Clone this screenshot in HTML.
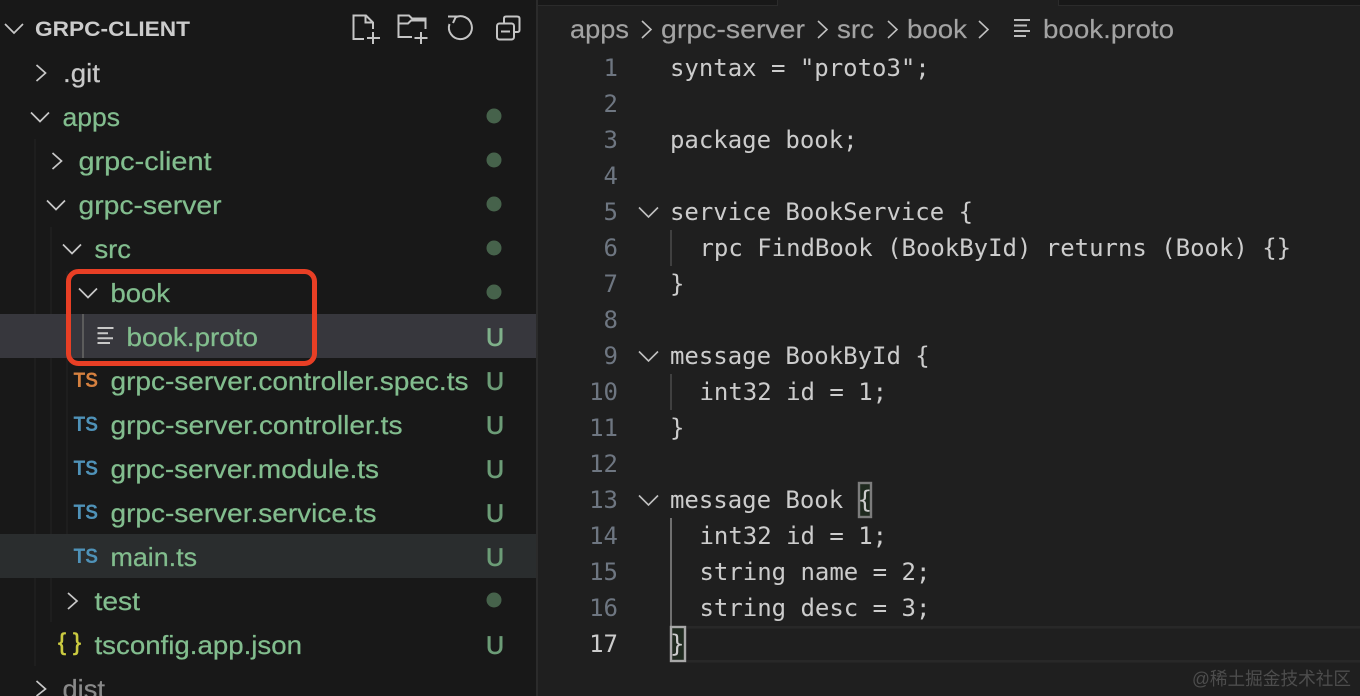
<!DOCTYPE html>
<html><head><meta charset="utf-8"><style>
html,body{margin:0;padding:0;background:#1f1f1f;width:1360px;height:696px;overflow:hidden}
svg{display:block}
text{white-space:pre}
.t{font-family:"Liberation Sans",sans-serif;font-size:26px;fill:#82bd8e;stroke:#82bd8e;stroke-width:.25}
.g{fill:#c8c8c8;stroke:#c8c8c8}
.d{fill:#8a8a8a;stroke:#8a8a8a}
.u{font-family:"Liberation Sans",sans-serif;font-size:25px;fill:#6c9c77;stroke:#6c9c77;stroke-width:.7}
.ts{font-family:"Liberation Sans",sans-serif;font-size:21px;font-weight:700;fill:#4f92b8}
.b{font-family:"Liberation Sans",sans-serif;font-size:26px;fill:#a3a3a3;stroke:#a3a3a3;stroke-width:.15}
.c{font-family:"DejaVu Sans Mono","Liberation Mono",monospace;font-size:24px;letter-spacing:-.02px;fill:#cccccc}
.n{font-family:"DejaVu Sans Mono","Liberation Mono",monospace;font-size:24px;fill:#6e7681;text-anchor:end}
.chev{fill:none;stroke:#c8c8c8;stroke-width:1.7}
.ic{fill:none;stroke:#c5c5c5;stroke-width:2}
.fold{fill:none;stroke:#c0c0c0;stroke-width:1.6}
</style></head><body>
<svg width="1360" height="696" viewBox="0 0 1360 696" xmlns="http://www.w3.org/2000/svg">
<rect width="1360" height="696" fill="#1f1f1f"/>
<rect x="0" y="0" width="536" height="696" fill="#181818"/>
<rect x="536" y="0" width="2" height="696" fill="#2b2b2b"/>
<!-- tab strip -->
<rect x="538" y="0" width="240" height="5" fill="#181818"/>
<rect x="778" y="0" width="280" height="6" fill="#1f1f1f"/>
<rect x="1058" y="0" width="302" height="5" fill="#181818"/>
<rect x="538" y="5" width="240" height="1" fill="#2b2b2b"/>
<rect x="1058" y="5" width="302" height="1" fill="#2b2b2b"/>
<rect x="777" y="0" width="1" height="6" fill="#2b2b2b"/>
<rect x="1058" y="0" width="1" height="6" fill="#2b2b2b"/>

<!-- indent guides -->
<rect x="34" y="139" width="2" height="527" fill="#1e1e1e"/>
<rect x="50" y="227" width="2" height="395" fill="#1e1e1e"/>
<rect x="66" y="271" width="2" height="307" fill="#1e1e1e"/>

<!-- rows -->
<rect x="0" y="314" width="536" height="44" fill="#37373d"/>
<rect x="0" y="534" width="536" height="44" fill="#2a2d2e"/>
<rect x="82" y="314" width="2" height="44" fill="#5c5c5c"/>

<!-- header -->
<path class="chev" d="M5 24 L14 33 L23 24"/>
<text x="35" y="36" style="font-family:'Liberation Sans',sans-serif;font-size:21px;font-weight:700;fill:#cccccc" textLength="155" lengthAdjust="spacingAndGlyphs">GRPC-CLIENT</text>
<!-- new file -->
<path class="ic" d="M364 39 H353.500 V15.500 H366 L373 22.500 V29 M365.500 15.500 V22.500 H373"/>
<path class="ic" d="M373 32 V44 M367 38 H380"/>
<!-- new folder -->
<path class="ic" d="M412 37 H398.500 V15.500 H409 L412 18.500 H425.500 V29 M398.500 23.500 H408 L411 20.500 H425.500"/>
<path class="ic" d="M421 32 V44 M414.500 38 H427.500"/>
<!-- refresh -->
<path class="ic" d="M455 17.500 A11.500 11.500 0 1 1 449.500 24"/>
<path class="ic" d="M448 16.500 H456 L453 23"/>
<!-- collapse -->
<path class="ic" d="M504 23 V18.500 Q504 16.500 506 16.500 H517 Q519.500 16.500 519.500 18.500 V30 Q519.500 32 517 32 H514"/>
<rect class="ic" x="497" y="23.500" width="17" height="16" rx="2.500"/>
<path class="ic" d="M501 31.500 H510"/>

<!-- chevrons -->
<path class="chev" d="M36.500 65 L45.500 73 L36.500 81"/>
<path class="chev" d="M31 112.500 L40 121.500 L49 112.500"/>
<path class="chev" d="M52.500 153 L61.500 161 L52.500 169"/>
<path class="chev" d="M47 200.500 L56 209.500 L65 200.500"/>
<path class="chev" d="M63 244.500 L72 253.500 L81 244.500"/>
<path class="chev" d="M79 288.500 L88 297.500 L97 288.500"/>
<path class="chev" d="M68 593 L77 601 L68 609"/>
<path class="chev" d="M36.500 681 L45.500 689 L36.500 696"/>

<!-- tree text -->
<text class="t g" x="63" y="82" textLength="37" lengthAdjust="spacingAndGlyphs">.git</text>
<text class="t" x="62.500" y="126" textLength="57.500" lengthAdjust="spacingAndGlyphs">apps</text>
<text class="t" x="78.500" y="170" textLength="133" lengthAdjust="spacingAndGlyphs">grpc-client</text>
<text class="t" x="78.500" y="214" textLength="143" lengthAdjust="spacingAndGlyphs">grpc-server</text>
<text class="t" x="94.500" y="258" textLength="36.500" lengthAdjust="spacingAndGlyphs">src</text>
<text class="t" x="110.500" y="302" textLength="59.500" lengthAdjust="spacingAndGlyphs">book</text>
<text class="t" x="126.500" y="346" textLength="131.500" lengthAdjust="spacingAndGlyphs">book.proto</text>
<text class="t" x="110.500" y="390" textLength="358" lengthAdjust="spacingAndGlyphs">grpc-server.controller.spec.ts</text>
<text class="t" x="110.500" y="434" textLength="292" lengthAdjust="spacingAndGlyphs">grpc-server.controller.ts</text>
<text class="t" x="110.500" y="478" textLength="268.500" lengthAdjust="spacingAndGlyphs">grpc-server.module.ts</text>
<text class="t" x="110.500" y="522" textLength="266" lengthAdjust="spacingAndGlyphs">grpc-server.service.ts</text>
<text class="t" x="110.500" y="566" textLength="86.500" lengthAdjust="spacingAndGlyphs">main.ts</text>
<text class="t" x="94.500" y="610" textLength="45.500" lengthAdjust="spacingAndGlyphs">test</text>
<text class="t" x="94.500" y="654" textLength="207.500" lengthAdjust="spacingAndGlyphs">tsconfig.app.json</text>
<text class="t d" x="62.500" y="698" textLength="42.500" lengthAdjust="spacingAndGlyphs">dist</text>

<!-- file icons -->
<path d="M97.500 328 H113.500 M97.500 333.300 H108 M97.500 338.300 H113 M97.500 343 H110" stroke="#c8c8c8" stroke-width="2" fill="none"/>
<text class="ts" x="73.500" y="387" style="fill:#d5803f" textLength="24.500" lengthAdjust="spacingAndGlyphs">TS</text>
<text class="ts" x="73.500" y="431" textLength="24.500" lengthAdjust="spacingAndGlyphs">TS</text>
<text class="ts" x="73.500" y="475" textLength="24.500" lengthAdjust="spacingAndGlyphs">TS</text>
<text class="ts" x="73.500" y="519" textLength="24.500" lengthAdjust="spacingAndGlyphs">TS</text>
<text class="ts" x="73.500" y="563" textLength="24.500" lengthAdjust="spacingAndGlyphs">TS</text>
<text x="58" y="650" style="font-family:'Liberation Sans',sans-serif;font-size:24px;fill:#cbcb41;stroke:#cbcb41;stroke-width:.6">{</text>
<text x="73" y="650" style="font-family:'Liberation Sans',sans-serif;font-size:24px;fill:#cbcb41;stroke:#cbcb41;stroke-width:.6">}</text>

<!-- decorations -->
<g fill="#46624b">
<circle cx="494" cy="116" r="7.500"/><circle cx="494" cy="160" r="7.500"/><circle cx="494" cy="204" r="7.500"/><circle cx="494" cy="248" r="7.500"/><circle cx="494" cy="292" r="7.500"/><circle cx="494" cy="600" r="7.500"/>
</g>
<text class="u" x="486" y="346" style="fill:#7fb08a;stroke:#7fb08a">U</text>
<text class="u" x="486" y="390">U</text>
<text class="u" x="486" y="434">U</text>
<text class="u" x="486" y="478">U</text>
<text class="u" x="486" y="522">U</text>
<text class="u" x="486" y="566">U</text>
<text class="u" x="486" y="654">U</text>

<!-- red highlight -->
<rect x="68.500" y="271.500" width="246" height="92" rx="10" fill="none" stroke="#e83f25" stroke-width="5"/>

<!-- breadcrumb -->
<text class="b" x="570" y="38" textLength="59" lengthAdjust="spacingAndGlyphs">apps</text>
<path class="fold" d="M642 21 L651 29.500 L642 38"/>
<text class="b" x="661" y="38" textLength="144" lengthAdjust="spacingAndGlyphs">grpc-server</text>
<path class="fold" d="M818 21 L827 29.500 L818 38"/>
<text class="b" x="837" y="38" textLength="37" lengthAdjust="spacingAndGlyphs">src</text>
<path class="fold" d="M888 21 L897 29.500 L888 38"/>
<text class="b" x="907" y="38" textLength="60" lengthAdjust="spacingAndGlyphs">book</text>
<path class="fold" d="M979 21 L988 29.500 L979 38"/>
<path d="M1014 20 H1030 M1014 25.500 H1027 M1014 31 H1030 M1014 36 H1026" stroke="#bdbdbd" stroke-width="2" fill="none"/>
<text class="b" x="1043" y="38" textLength="131" lengthAdjust="spacingAndGlyphs">book.proto</text>

<!-- current line -->
<rect x="686" y="626" width="674" height="2.500" fill="#282828"/>
<rect x="686" y="660" width="674" height="2.500" fill="#282828"/>

<!-- indent guides editor -->
<rect x="670" y="230" width="2" height="36" fill="#404040"/>
<rect x="670" y="374" width="2" height="36" fill="#404040"/>
<rect x="670" y="518" width="2" height="108" fill="#707070"/>

<!-- bracket boxes -->
<rect x="859" y="483" width="12" height="34" fill="#1f2a1f" stroke="#7c7c7c" stroke-width="2.400"/>
<rect x="671" y="627" width="14" height="34" fill="#1f2a1f" stroke="#a8a8a8" stroke-width="2.400"/>

<!-- line numbers -->
<text class="n" x="618" y="76">1</text>
<text class="n" x="618" y="112">2</text>
<text class="n" x="618" y="148">3</text>
<text class="n" x="618" y="184">4</text>
<text class="n" x="618" y="220">5</text>
<text class="n" x="618" y="256">6</text>
<text class="n" x="618" y="292">7</text>
<text class="n" x="618" y="328">8</text>
<text class="n" x="618" y="364">9</text>
<text class="n" x="618" y="400">10</text>
<text class="n" x="618" y="436">11</text>
<text class="n" x="618" y="472">12</text>
<text class="n" x="618" y="508">13</text>
<text class="n" x="618" y="544">14</text>
<text class="n" x="618" y="580">15</text>
<text class="n" x="618" y="616">16</text>
<text class="n" x="618" y="652" style="fill:#cccccc">17</text>

<!-- folds -->
<path class="fold" d="M639 207.500 L648.500 217 L658 207.500"/>
<path class="fold" d="M639 351.500 L648.500 361 L658 351.500"/>
<path class="fold" d="M639 495.500 L648.500 505 L658 495.500"/>

<!-- code -->
<text class="c" x="670" y="76">syntax = "proto3";</text>
<text class="c" x="670" y="148">package book;</text>
<text class="c" x="670" y="220">service BookService {</text>
<text class="c" x="699.500" y="256">rpc FindBook (BookById) returns (Book) {}</text>
<text class="c" x="670" y="292">}</text>
<text class="c" x="670" y="364">message BookById {</text>
<text class="c" x="699.500" y="400">int32 id = 1;</text>
<text class="c" x="670" y="436">}</text>
<text class="c" x="670" y="508">message Book {</text>
<text class="c" x="699.500" y="544">int32 id = 1;</text>
<text class="c" x="699.500" y="580">string name = 2;</text>
<text class="c" x="699.500" y="616">string desc = 3;</text>
<text class="c" x="670" y="652">}</text>

<!-- watermark -->
<text x="1192" y="685" style="font-family:'Liberation Sans','Noto Sans CJK SC',sans-serif;font-size:18px;fill:#4d4d4d" textLength="159" lengthAdjust="spacingAndGlyphs">@稀土掘金技术社区</text>
</svg>
</body></html>
